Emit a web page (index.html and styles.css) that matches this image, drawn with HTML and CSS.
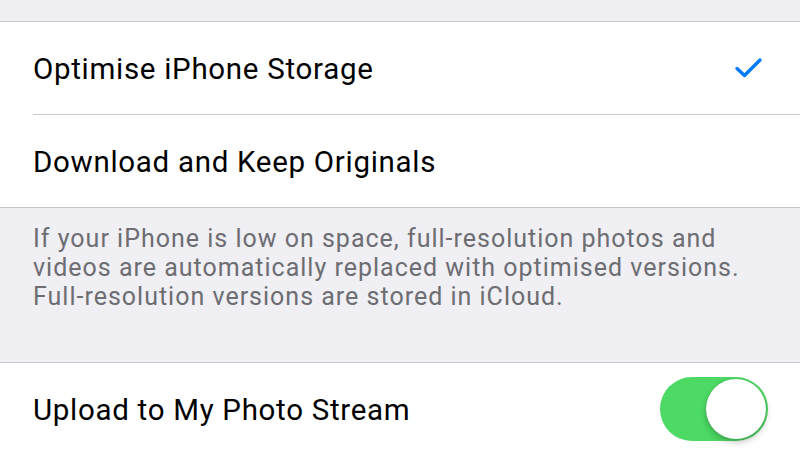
FILE: index.html
```html
<!DOCTYPE html>
<html>
<head>
<meta charset="utf-8">
<link rel="stylesheet" href="styles.css">
</head>
<body>
<div class="screen">
  <div class="top-gap"></div>
  <div class="group">
    <div class="row">
      <div class="row-inner sep">
        <span class="label">Optimise iPhone Storage</span>
        <svg class="check" width="30" height="24" viewBox="0 0 30 24"><path d="M3 12.5 L10.5 19.5 L26 4" fill="none" stroke="#007aff" stroke-width="3.4" stroke-linecap="round" stroke-linejoin="round"/></svg>
      </div>
    </div>
    <div class="row">
      <div class="row-inner">
        <span class="label">Download and Keep Originals</span>
      </div>
    </div>
  </div>
  <div class="footer">
    <p>If your iPhone is low on space, full-resolution photos and<br>videos are automatically replaced with optimised versions.<br>Full-resolution versions are stored in iCloud.</p>
  </div>
  <div class="group">
    <div class="row">
      <div class="row-inner">
        <span class="label">Upload to My Photo Stream</span>
        <div class="toggle"><div class="knob"></div></div>
      </div>
    </div>
  </div>
</div>
</body>
</html>
```
FILE: styles.css
```css
html, body {
  margin: 0;
  padding: 0;
  background: #efeff4;
}
.screen {
  width: 800px;
  height: 450px;
  overflow: hidden;
  background: #efeff4;
  font-family: "Roboto", "Liberation Sans", sans-serif;
  color: #000;
}
.top-gap {
  height: 21px;
}
.group {
  background: #fff;
  border-top: 1px solid #c8c7cc;
  border-bottom: 1px solid #c8c7cc;
}
.row {
  padding-left: 33px;
}
.row-inner {
  height: 92px;
  display: flex;
  align-items: center;
  justify-content: space-between;
  padding-right: 34px;
}
.row-inner.sep {
  border-bottom: 1px solid #c8c7cc;
}
.label {
  font-size: 29.5px;
  letter-spacing: 0.7px;
  position: relative;
  top: 1px;
}
.check {
  display: block;
  margin-right: 2px;
}
.footer {
  height: 154px;
  box-sizing: border-box;
  padding: 16px 33px 0 33px;
}
.footer p {
  margin: 0;
  font-size: 25px;
  line-height: 29px;
  letter-spacing: 1px;
  color: #6d6d72;
  white-space: nowrap;
}
.toggle {
  width: 108px;
  height: 64px;
  border-radius: 32px;
  background: #4cd964;
  position: relative;
  margin-right: -2px;
}
.knob {
  position: absolute;
  top: 2px;
  right: 2px;
  width: 60px;
  height: 60px;
  border-radius: 50%;
  background: #fff;
  box-shadow: 0 3px 6px rgba(0,0,0,0.25), 0 0 1px rgba(0,0,0,0.2);
}
```
